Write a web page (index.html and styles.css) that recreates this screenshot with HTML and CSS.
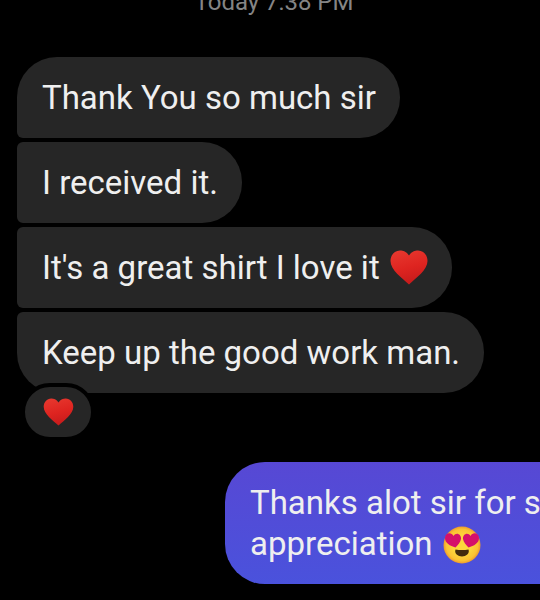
FILE: index.html
```
<!DOCTYPE html>
<html lang="en">
<head>
<meta charset="utf-8">
<meta name="viewport" content="width=device-width, initial-scale=1">
<title>Chat</title>
<link rel="stylesheet" href="styles.css">
</head>
<body>
<svg class="defs" aria-hidden="true">
  <defs>
    <linearGradient id="red" x1="0" y1="0" x2="0.3" y2="1">
      <stop offset="0" stop-color="#e83a30"/>
      <stop offset="0.6" stop-color="#de2420"/>
      <stop offset="1" stop-color="#c91c1c"/>
    </linearGradient>
    <radialGradient id="face" cx="0.5" cy="0.5" r="0.5">
      <stop offset="0.5" stop-color="#fdd63c"/>
      <stop offset="0.85" stop-color="#fbc233"/>
      <stop offset="1" stop-color="#ee9a2c"/>
    </radialGradient>
    <symbol id="heart" viewBox="0 0 38 35">
      <path fill="url(#red)" d="M19 5.500C16.500 1.500 13 .5 10 .5C4.500 .5 .5 5 .5 11C.5 20 12 28 19 34.500C26 28 37.500 20 37.500 11C37.500 5 33.500 .5 28 .5C25 .5 21.500 1.500 19 5.500Z"/>
    </symbol>
    <symbol id="love" viewBox="0 0 38 38">
      <circle cx="19" cy="19" r="18.500" fill="url(#face)"/>
      <path fill="#d5106a" d="M12.500 21.500C7 20 2 17 2 12C2 6.500 8.500 5.500 10.500 10C13 5.500 18.500 8 18 13C17.500 16 15 19 12.500 21.500Z"/>
      <path fill="#d5106a" d="M25.500 21.500C31 20 36 17 36 12C36 6.500 29.500 5.500 27.500 10C25 5.500 19.500 8 20 13C20.500 16 23 19 25.500 21.500Z"/>
      <path fill="#422b0d" d="M12.500 23.500Q19 24.500 25.500 23.500C27 27.500 23 30.500 19 30.500S11 27.500 12.500 23.500Z"/>
    </symbol>
  </defs>
</svg>
<main class="chat">
  <time class="stamp">Today 7:38 PM</time>
  <section class="received">
    <p class="bubble first">Thank You so much sir</p>
    <p class="bubble">I received it.</p>
    <p class="bubble">It's a great shirt I love it <svg class="emoji" role="img" aria-label="Red heart"><use href="#heart"/></svg></p>
    <p class="bubble last">Keep up the good work man.
      <span class="reaction"><svg class="reaction-heart" role="img" aria-label="Red heart"><use href="#heart"/></svg></span>
    </p>
  </section>
  <section class="sent">
    <p class="bubble outgoing">Thanks alot sir for s<br>appreciation <svg class="emoji face" role="img" aria-label="Smiling face with heart eyes"><use href="#love"/></svg></p>
  </section>
</main>
</body>
</html>
```
FILE: styles.css
```
* {
  box-sizing: border-box;
}

body {
  margin: 0;
  background: #000;
  color: #efefef;
  font-family: Roboto, "Liberation Sans", sans-serif;
  font-size: 33px;
  line-height: 41px;
}

.defs {
  position: absolute;
  width: 0;
  height: 0;
}

.chat {
  display: flex;
  flex-direction: column;
  overflow: hidden;
}

.stamp {
  align-self: center;
  margin: -12px 0 41px;
  padding-left: 8px;
  color: #858585;
  font-size: 24px;
  line-height: 28px;
}

.received {
  display: flex;
  flex-direction: column;
  align-items: flex-start;
  gap: 4px;
  padding-left: 17px;
}

.bubble {
  position: relative;
  margin: 0;
  padding: 20px 24px 20px 25px;
  border-radius: 6px 40px 40px 6px;
  background: #262626;
  white-space: nowrap;
}

.first {
  border-top-left-radius: 40px;
}

.last {
  border-bottom-left-radius: 40px;
}

.emoji {
  width: 38px;
  height: 35px;
  margin-left: 2px;
  vertical-align: -6px;
}

.reaction {
  position: absolute;
  top: 71px;
  left: 4px;
  display: flex;
  align-items: center;
  justify-content: center;
  width: 74px;
  height: 58px;
  border: 4px solid #000;
  border-radius: 29px;
  background: #262626;
}

.reaction-heart {
  width: 31px;
  height: 28px;
}

.sent {
  margin: 69px 0 16px;
  padding-left: 225px;
}

.outgoing {
  border-radius: 40px 0 0 40px;
  background: linear-gradient(#5748d4, #4a52dc);
}

.face {
  height: 38px;
  margin-block: -4px;
  vertical-align: -5px;
}
```
